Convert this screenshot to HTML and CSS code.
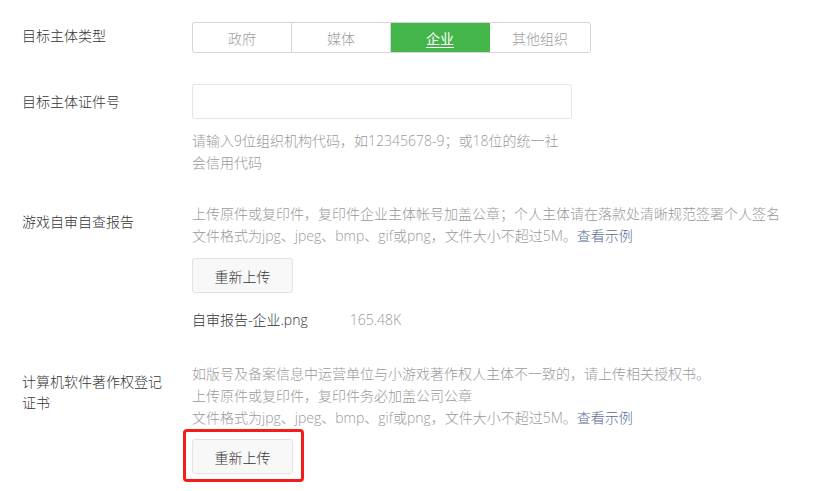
FILE: index.html
```html
<!DOCTYPE html>
<html lang="zh-CN">
<head>
<meta charset="utf-8">
<title>表单</title>
<link rel="stylesheet" href="styles.css">
</head>
<body>
<div class="form">
  <div class="row row-1">
    <div class="label label-top">目标主体类型</div>
    <div class="seg">
      <span class="seg-item">政府</span>
      <span class="seg-item">媒体</span>
      <span class="seg-item seg-active">企业</span>
      <span class="seg-item">其他组织</span>
    </div>
  </div>
  <div class="row row-2">
    <div class="label">目标主体证件号</div>
    <div class="field">
      <input class="input" type="text">
      <p class="hint hint-narrow">请输入9位组织机构代码，如12345678-9；或18位的统一社会信用代码</p>
    </div>
  </div>
  <div class="row row-3">
    <div class="label">游戏自审自查报告</div>
    <div class="field">
      <p class="hint">上传原件或复印件，复印件企业主体帐号加盖公章；个人主体请在落款处清晰规范签署个人签名<br>文件格式为jpg、jpeg、bmp、gif或png，文件大小不超过5M。<a class="link" href="#">查看示例</a></p>
      <button class="btn" type="button">重新上传</button>
      <div class="file"><span class="file-name">自审报告-企业.png</span><span class="file-size">165.48K</span></div>
    </div>
  </div>
  <div class="row row-4">
    <div class="label">计算机软件著作权登记证书</div>
    <div class="field">
      <p class="hint">如版号及备案信息中运营单位与小游戏著作权人主体不一致的，请上传相关授权书。<br>上传原件或复印件，复印件务必加盖公司公章<br>文件格式为jpg、jpeg、bmp、gif或png，文件大小不超过5M。<a class="link" href="#">查看示例</a></p>
      <div class="btn-wrap marked">
        <button class="btn" type="button">重新上传</button>
      </div>
    </div>
  </div>
</div>
</body>
</html>
```

FILE: styles.css
```css
* { box-sizing: border-box; }
html, body {
  margin: 0;
  padding: 0;
  background: #ffffff;
  overflow: hidden;
}
body {
  font-family: "Open Sans", "Noto Sans CJK SC", sans-serif;
  font-size: 14px;
  font-weight: 300;
  color: #353535;
  height: 491px;
}
.form {
  padding: 22px 0 0 22px;
}
.row {
  display: flex;
  align-items: flex-start;
}
.row-1 { margin-bottom: 31px; }
.row-2 { margin-bottom: 29px; }
.row-3 { margin-bottom: 32px; }
.label {
  width: 170px;
  padding-right: 28px;
  padding-top: 8px;
  line-height: 21px;
  color: #353535;
  flex-shrink: 0;
}
.label-top { padding-top: 3px; }
.row-2 .label { padding-top: 7px; }

.seg {
  display: flex;
  height: 31px;
  border: 1px solid #d6d6d6;
  border-radius: 3px;
  overflow: hidden;
}
.seg-item {
  width: 99px;
  display: flex;
  align-items: center;
  justify-content: center;
  color: #9d9d9d;
  border-right: 1px solid #d6d6d6;
}
.seg-item:last-child {
  border-right: none;
  width: 100px;
}
.seg-active {
  background: #44b549;
  color: #ffffff;
  font-weight: 400;
  border-right-color: #44b549;
  text-decoration: underline;
  text-underline-offset: 3px;
}
.field {
  display: flex;
  flex-direction: column;
  align-items: flex-start;
}
.input {
  width: 380px;
  height: 35px;
  border: 1px solid #e4e4e4;
  border-radius: 3px;
  margin: 0;
  padding: 0 10px;
  font: inherit;
  outline: none;
}
.hint {
  margin: 0;
  color: #9a9a9a;
  line-height: 22px;
  white-space: nowrap;
}
.hint-narrow {
  margin-top: 11px;
  width: 380px;
  white-space: normal;
}
.link {
  color: #576b95;
  text-decoration: none;
}
.btn {
  width: 101px;
  height: 35px;
  margin: 11px 0 0 0;
  border: 1px solid #e2e2e2;
  border-radius: 3px;
  background: #f8f8f8;
  color: #353535;
  font: inherit;
  padding: 0;
}
.file {
  margin-top: 16px;
  line-height: 22px;
  color: #353535;
}
.file-size {
  margin-left: 42px;
  color: #9a9a9a;
}
.row-4 .label { width: 170px; padding-right: 25px; }
.btn-wrap {
  position: relative;
  margin-top: 10px;
}
.btn-wrap .btn { margin-top: 0; display: block; }
.marked::after {
  content: "";
  position: absolute;
  left: -9px;
  top: -10px;
  right: -11px;
  bottom: -8px;
  border: 3px solid #f51d1a;
  border-radius: 4px;
  pointer-events: none;
}
```
